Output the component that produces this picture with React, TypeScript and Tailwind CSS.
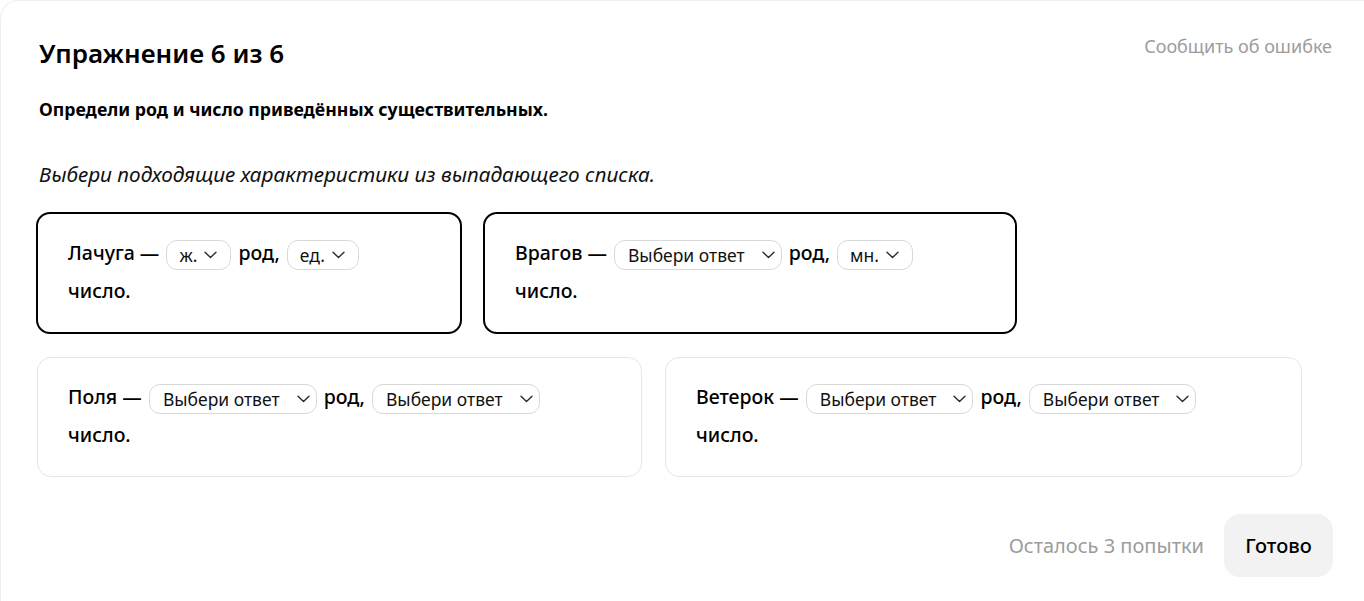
import React from "react";

type Part = { word: string; gender: string; number: string };

const rowOne: (Part & { width: string })[] = [
  { word: "Лачуга", gender: "ж.", number: "ед.", width: "w-[426px]" },
  { word: "Врагов", gender: "Выбери ответ", number: "мн.", width: "w-[534px]" },
];

const rowTwo: (Part & { width: string })[] = [
  { word: "Поля", gender: "Выбери ответ", number: "Выбери ответ", width: "w-[605px]" },
  { word: "Ветерок", gender: "Выбери ответ", number: "Выбери ответ", width: "w-[637px]" },
];

function Chevron() {
  return (
    <svg width="13" height="8" viewBox="0 0 13 8" fill="none" className="shrink-0">
      <path d="M1 1.2l5.5 5.3 5.5-5.3" stroke="#2b2b2b" strokeWidth="1.4" strokeLinecap="round" strokeLinejoin="round" />
    </svg>
  );
}

function Select({ value }: { value: string }) {
  const empty = value === "Выбери ответ";
  return (
    <span
      className={`mx-[2px] inline-flex h-[30px] items-center rounded-[11px] border border-[#d9d9d9] bg-white align-middle text-[17.5px] font-normal text-[#111] ${
        empty ? "pl-[13px] pr-[6px]" : "pl-[12px] pr-[13px]"
      }`}
    >
      <span className={empty ? "mr-[17px]" : "mr-[7px]"}>{value}</span>
      <Chevron />
    </span>
  );
}

function Card({ item, active }: { item: Part & { width: string }; active: boolean }) {
  return (
    <div
      className={`${item.width} rounded-[14px] px-[30px] pb-[22px] pt-[20px] ${
        active ? "border-2 border-black" : "border border-[#e6e6e6]"
      }`}
    >
      <div className="text-[19.5px] font-medium leading-[38px] text-black">
        {item.word} — <Select value={item.gender} /> род, <Select value={item.number} />
        <br />
        число.
      </div>
    </div>
  );
}

export default function App() {
  return (
    <div
      className="min-h-[601px] rounded-tl-[18px] border-l border-t border-[#eeeeee] bg-white text-black"
      style={{ fontFamily: '"Noto Sans", "Open Sans", sans-serif' }}
    >
      <div className="flex items-start justify-between pl-[38px] pr-[32px] pt-[36px]">
        <h1 className="text-[26px] font-semibold leading-[32px]">Упражнение 6 из 6</h1>
        <button className="-mt-[3px] text-[18px] leading-[24px] text-[#9c9c9c]">Сообщить об ошибке</button>
      </div>

      <p className="mt-[28px] pl-[38px] text-[17.7px] font-bold leading-[24px]">
        Определи род и число приведённых существительных.
      </p>

      <p className="mt-[39px] pl-[38px] text-[20.8px] italic leading-[28px] text-[#111]">
        Выбери подходящие характеристики из выпадающего списка.
      </p>

      <div className="mt-[24px] flex gap-[21px] pl-[35px]">
        {rowOne.map((item) => (
          <Card key={item.word} item={item} active />
        ))}
      </div>

      <div className="mt-[23px] flex gap-[23px] pl-[36px]">
        {rowTwo.map((item) => (
          <Card key={item.word} item={item} active={false} />
        ))}
      </div>

      <div className="mt-[37px] flex items-center justify-end gap-[20px] pr-[31px]">
        <span className="text-[20px] text-[#9c9c9c]">Осталось 3 попытки</span>
        <button className="h-[63px] w-[109px] rounded-[16px] bg-[#f2f2f2] text-[20px] font-medium text-black">
          Готово
        </button>
      </div>
    </div>
  );
}
